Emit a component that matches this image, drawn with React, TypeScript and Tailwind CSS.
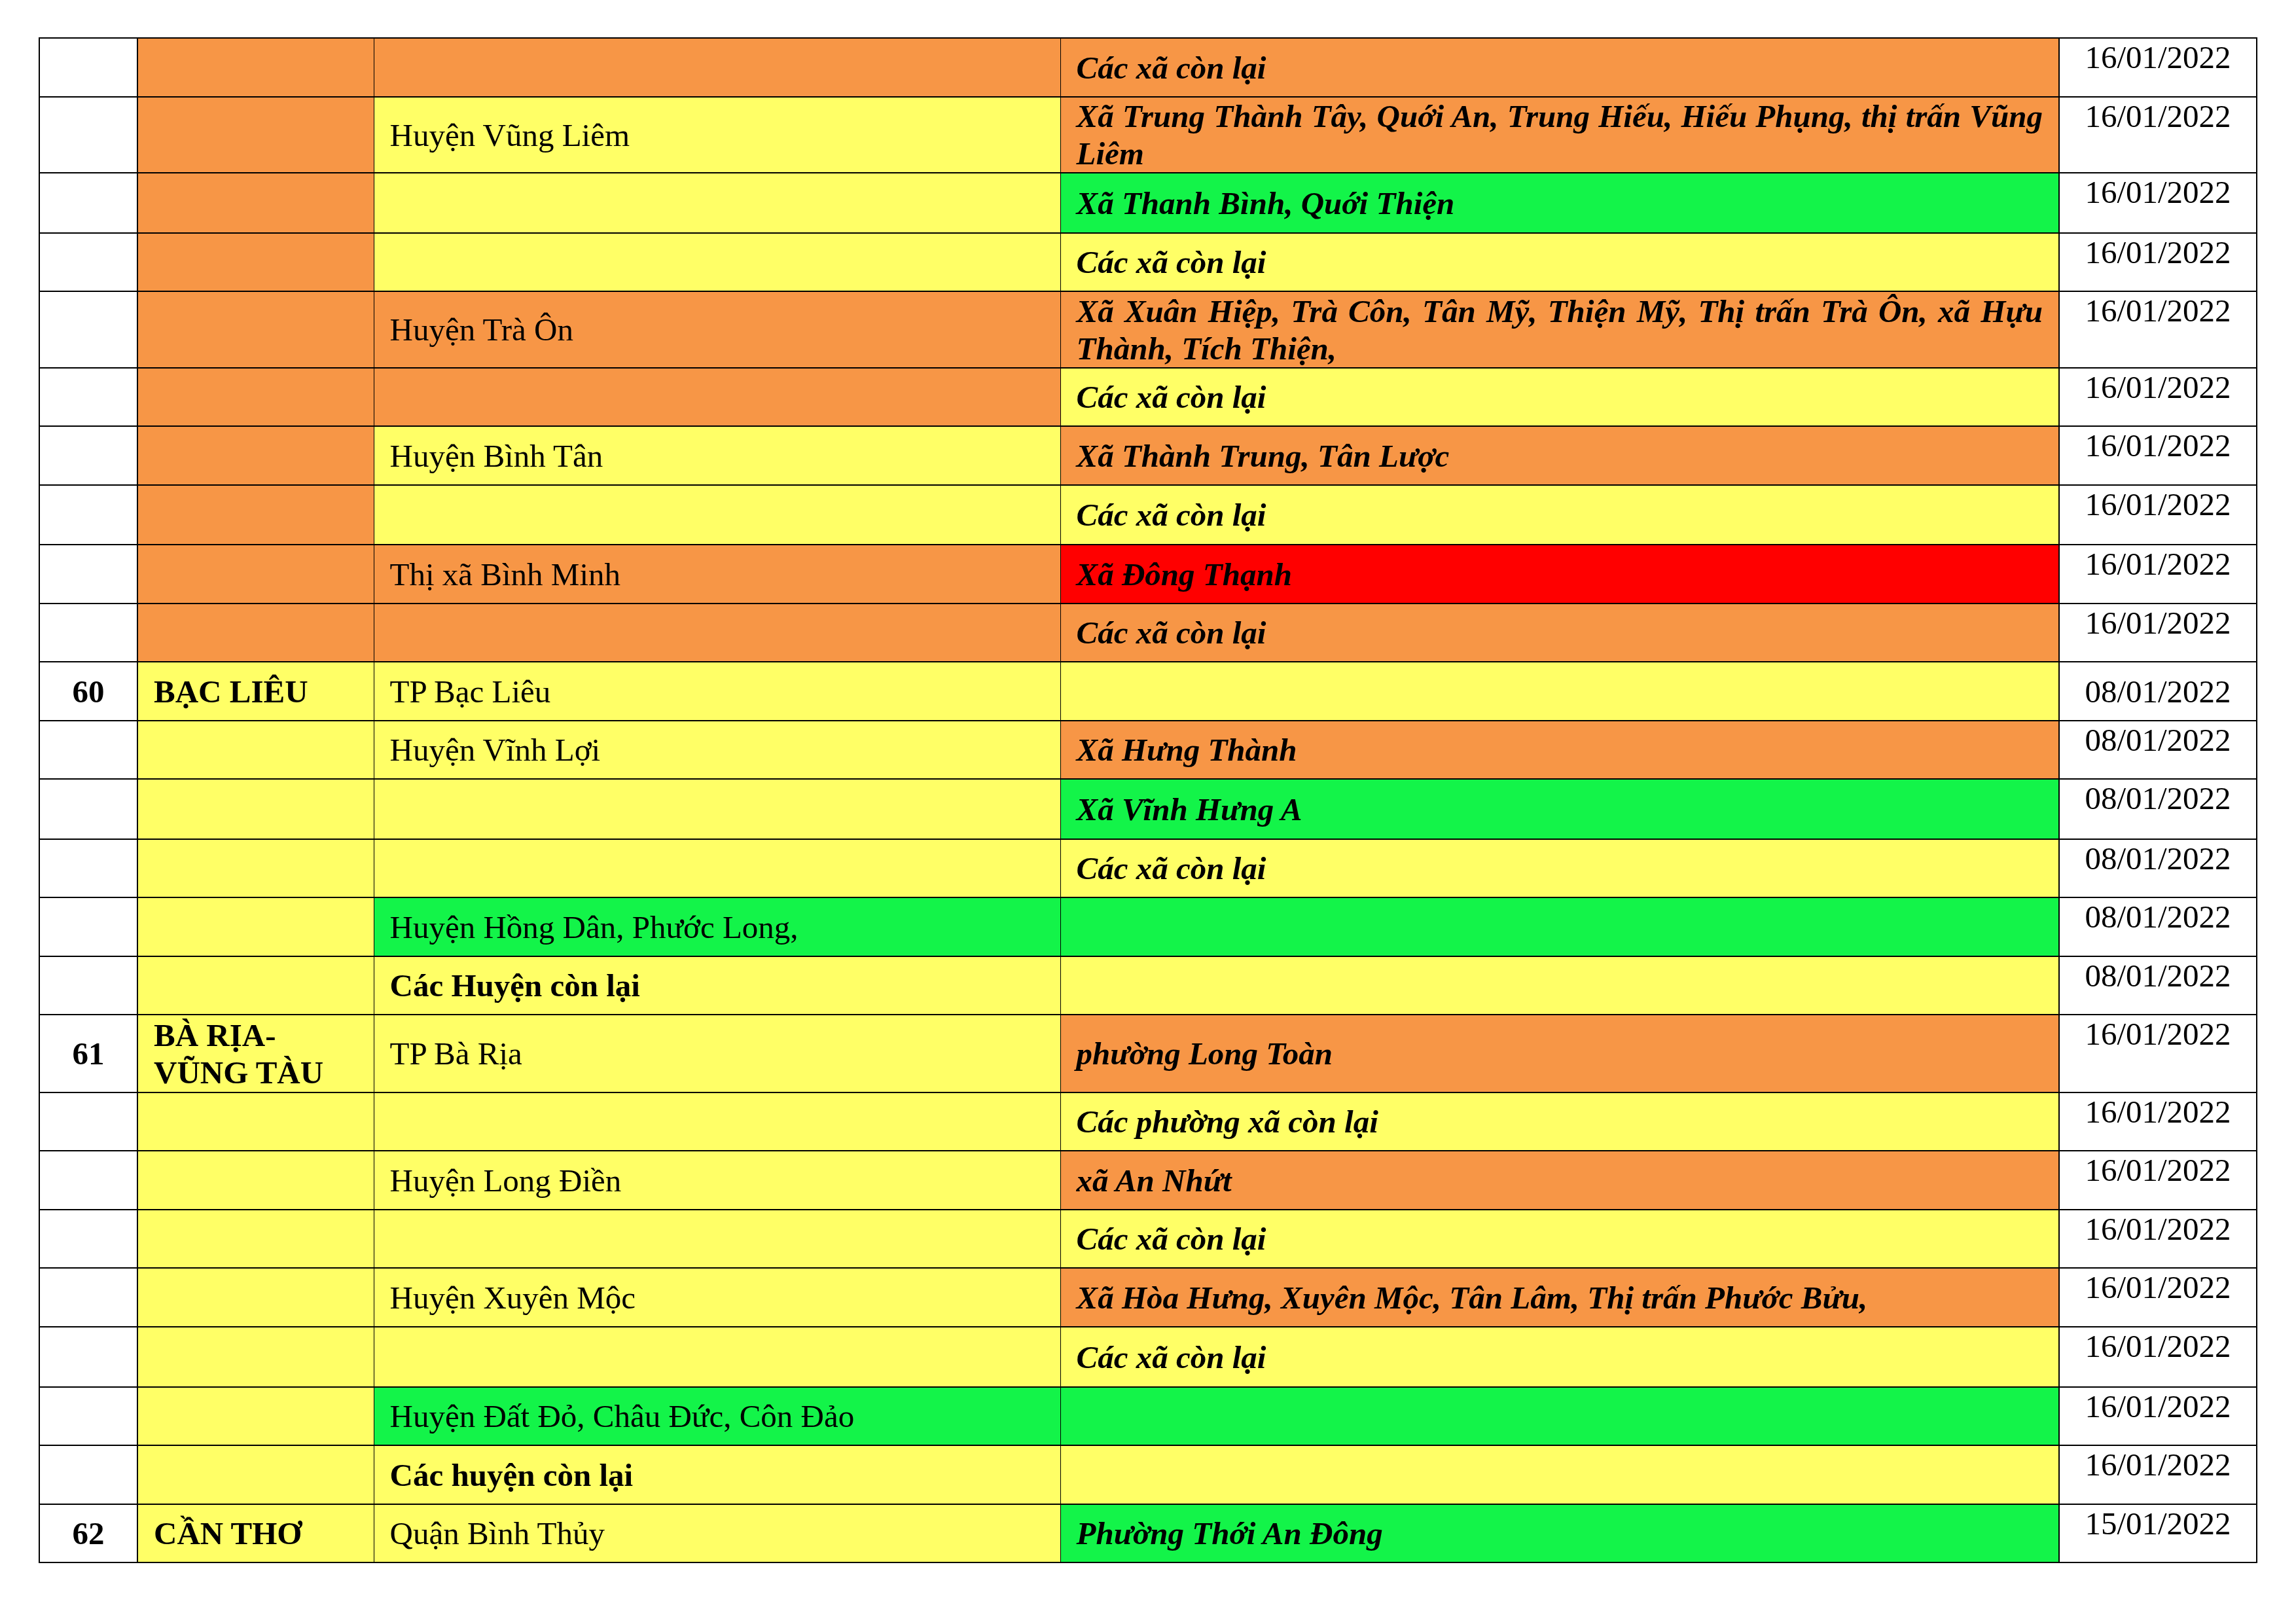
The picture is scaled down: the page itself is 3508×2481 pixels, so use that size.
const BG = {
  o: "bg-[#f79646]",
  y: "bg-[#ffff66]",
  g: "bg-[#13f449]",
  r: "bg-[#ff0000]",
};

type Color = keyof typeof BG;

type Row = {
  no?: string;
  prov?: string;
  pc: Color;
  dist?: string;
  dc: Color;
  distBold?: boolean;
  ward?: string;
  wc: Color;
  date: string;
  mid?: boolean;
  h: string;
};

const rows: Row[] = [
  { pc: "o", dc: "o", ward: "Các xã còn lại", wc: "o", date: "16/01/2022", h: "h-[90px]" },
  {
    pc: "o",
    dist: "Huyện Vũng Liêm",
    dc: "y",
    ward: "Xã Trung Thành Tây, Quới An, Trung Hiếu, Hiếu Phụng, thị trấn Vũng Liêm",
    wc: "o",
    date: "16/01/2022",
    h: "h-[116px]",
  },
  { pc: "o", dc: "y", ward: "Xã Thanh Bình, Quới Thiện", wc: "g", date: "16/01/2022", h: "h-[92px]" },
  { pc: "o", dc: "y", ward: "Các xã còn lại", wc: "y", date: "16/01/2022", h: "h-[89px]" },
  {
    pc: "o",
    dist: "Huyện Trà Ôn",
    dc: "o",
    ward: "Xã Xuân Hiệp, Trà Côn, Tân Mỹ, Thiện Mỹ, Thị trấn Trà Ôn, xã Hựu Thành, Tích Thiện,",
    wc: "o",
    date: "16/01/2022",
    h: "h-[117px]",
  },
  { pc: "o", dc: "o", ward: "Các xã còn lại", wc: "y", date: "16/01/2022", h: "h-[89px]" },
  { pc: "o", dist: "Huyện Bình Tân", dc: "y", ward: "Xã Thành Trung, Tân Lược", wc: "o", date: "16/01/2022", h: "h-[90px]" },
  { pc: "o", dc: "y", ward: "Các xã còn lại", wc: "y", date: "16/01/2022", h: "h-[91px]" },
  { pc: "o", dist: "Thị xã Bình Minh", dc: "o", ward: "Xã Đông Thạnh", wc: "r", date: "16/01/2022", h: "h-[90px]" },
  { pc: "o", dc: "o", ward: "Các xã còn lại", wc: "o", date: "16/01/2022", h: "h-[89px]" },
  { no: "60", prov: "BẠC LIÊU", pc: "y", dist: "TP Bạc Liêu", dc: "y", wc: "y", date: "08/01/2022", mid: true, h: "h-[90px]" },
  { pc: "y", dist: "Huyện Vĩnh Lợi", dc: "y", ward: "Xã Hưng Thành", wc: "o", date: "08/01/2022", h: "h-[89px]" },
  { pc: "y", dc: "y", ward: "Xã Vĩnh Hưng A", wc: "g", date: "08/01/2022", h: "h-[92px]" },
  { pc: "y", dc: "y", ward: "Các xã còn lại", wc: "y", date: "08/01/2022", h: "h-[89px]" },
  { pc: "y", dist: "Huyện Hồng Dân, Phước Long,", dc: "g", wc: "g", date: "08/01/2022", h: "h-[90px]" },
  { pc: "y", dist: "Các Huyện còn lại", distBold: true, dc: "y", wc: "y", date: "08/01/2022", h: "h-[89px]" },
  { no: "61", prov: "BÀ RỊA-\nVŨNG TÀU", pc: "y", dist: "TP Bà Rịa", dc: "y", ward: "phường Long Toàn", wc: "o", date: "16/01/2022", h: "h-[119px]" },
  { pc: "y", dc: "y", ward: "Các phường xã còn lại", wc: "y", date: "16/01/2022", h: "h-[89px]" },
  { pc: "y", dist: "Huyện Long Điền", dc: "y", ward: "xã An Nhứt", wc: "o", date: "16/01/2022", h: "h-[90px]" },
  { pc: "y", dc: "y", ward: "Các xã còn lại", wc: "y", date: "16/01/2022", h: "h-[89px]" },
  {
    pc: "y",
    dist: "Huyện Xuyên Mộc",
    dc: "y",
    ward: "Xã Hòa Hưng, Xuyên Mộc, Tân Lâm, Thị trấn Phước Bửu,",
    wc: "o",
    date: "16/01/2022",
    h: "h-[90px]",
  },
  { pc: "y", dc: "y", ward: "Các xã còn lại", wc: "y", date: "16/01/2022", h: "h-[92px]" },
  { pc: "y", dist: "Huyện Đất Đỏ, Châu Đức, Côn Đảo", dc: "g", wc: "g", date: "16/01/2022", h: "h-[89px]" },
  { pc: "y", dist: "Các huyện còn lại", distBold: true, dc: "y", wc: "y", date: "16/01/2022", h: "h-[90px]" },
  { no: "62", prov: "CẦN THƠ", pc: "y", dist: "Quận Bình Thủy", dc: "y", ward: "Phường Thới An Đông", wc: "g", date: "15/01/2022", h: "h-[89px]" },
];

export default function App() {
  return (
    <div className="min-h-screen bg-white pl-[59px] pt-[57px] font-['Liberation_Serif','Times_New_Roman',serif] text-[49px] leading-[57px] text-black">
      <table className="w-[3390px] table-fixed border-collapse border-2 border-black">
        <colgroup>
          <col className="w-[150px]" />
          <col className="w-[361px]" />
          <col className="w-[1049px]" />
          <col className="w-[1526px]" />
          <col className="w-[302px]" />
        </colgroup>
        <tbody>
          {rows.map((r, i) => (
            <tr key={i} className={r.h}>
              <td className="border-y-2 border-l-2 border-r-2 border-black bg-white p-0 text-center align-middle font-bold">
                {r.no}
              </td>
              <td className={`border-y-2 border-l-2 border-r border-black px-6 py-0 align-middle font-bold whitespace-pre-line ${BG[r.pc]}`}>
                {r.prov}
              </td>
              <td className={`border-x border-y-2 border-black px-6 py-0 align-middle ${r.distBold ? "font-bold" : ""} ${BG[r.dc]}`}>
                {r.dist}
              </td>
              <td className={`border-y-2 border-l border-r-2 border-black px-6 py-0 text-justify align-middle font-bold italic ${BG[r.wc]}`}>
                {r.ward}
              </td>
              <td className={`border-x-2 border-y-2 border-black bg-white p-0 text-center ${r.mid ? "align-middle" : "align-top"}`}>
                {r.date}
              </td>
            </tr>
          ))}
        </tbody>
      </table>
    </div>
  );
}
